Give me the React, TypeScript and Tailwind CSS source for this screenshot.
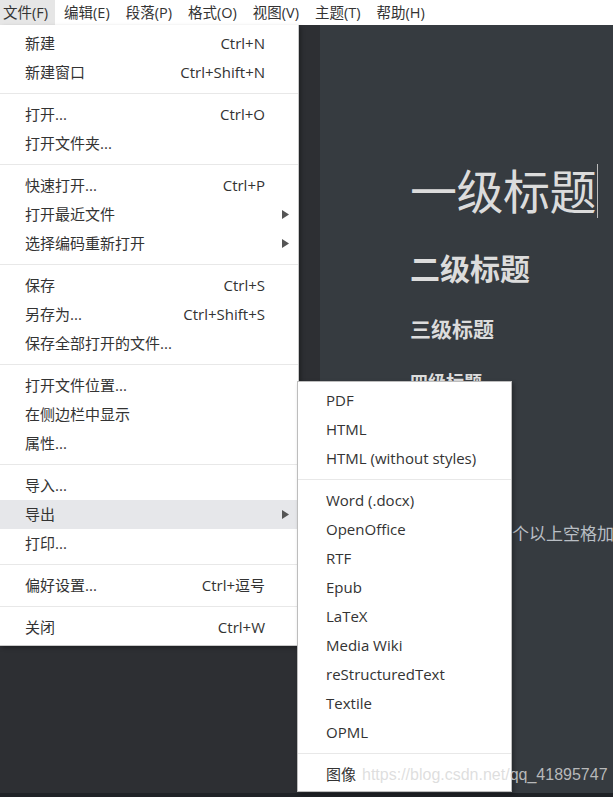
import React from "react";

type Item = { label: string; shortcut?: string; arrow?: boolean; active?: boolean };

const fileGroups: Item[][] = [
  [
    { label: "新建", shortcut: "Ctrl+N" },
    { label: "新建窗口", shortcut: "Ctrl+Shift+N" },
  ],
  [
    { label: "打开...", shortcut: "Ctrl+O" },
    { label: "打开文件夹..." },
  ],
  [
    { label: "快速打开...", shortcut: "Ctrl+P" },
    { label: "打开最近文件", arrow: true },
    { label: "选择编码重新打开", arrow: true },
  ],
  [
    { label: "保存", shortcut: "Ctrl+S" },
    { label: "另存为...", shortcut: "Ctrl+Shift+S" },
    { label: "保存全部打开的文件..." },
  ],
  [
    { label: "打开文件位置..." },
    { label: "在侧边栏中显示" },
    { label: "属性..." },
  ],
  [
    { label: "导入..." },
    { label: "导出", arrow: true, active: true },
    { label: "打印..." },
  ],
  [{ label: "偏好设置...", shortcut: "Ctrl+逗号" }],
  [{ label: "关闭", shortcut: "Ctrl+W" }],
];

const exportGroups: string[][] = [
  ["PDF", "HTML", "HTML (without styles)"],
  ["Word (.docx)", "OpenOffice", "RTF", "Epub", "LaTeX", "Media Wiki", "reStructuredText", "Textile", "OPML"],
  ["图像"],
];

const menus = ["文件(F)", "编辑(E)", "段落(P)", "格式(O)", "视图(V)", "主题(T)", "帮助(H)"];

function Arrow() {
  return (
    <svg width="7" height="9" viewBox="0 0 7 9" className="shrink-0">
      <polygon points="0,0 7,4.5 0,9" fill="#555" />
    </svg>
  );
}

function Sep() {
  return <div className="my-[6px] h-px bg-[#e8e8e8]" />;
}

export default function App() {
  const font = { fontFamily: '"Open Sans", "Noto Sans CJK SC", sans-serif' };
  return (
    <div
      className="relative w-[613px] h-[797px] overflow-hidden flex flex-col bg-[#363b40] text-[#333]"
      style={font}
    >
      {/* menu bar */}
      <div className="h-[25px] bg-white flex items-stretch text-[14.5px] shrink-0">
        {menus.map((m, i) => (
          <div
            key={m}
            className={`flex items-center whitespace-nowrap ${i === 0 ? "pl-[3px] pr-[7px] bg-[#e6e6e6]" : "pl-[9px] pr-[7px]"}`}
          >
            {m}
          </div>
        ))}
      </div>

      {/* body */}
      <div className="flex flex-1 min-h-0">
        <div className="w-[320px] bg-[#2d2f33] shrink-0" />
        <div className="flex-1 bg-[#363b40] overflow-hidden pl-[90px] pt-[138px] text-[#dcdcdc]">
          <div className="flex items-center h-[56px]">
            <span className="text-[47px] font-normal leading-none tracking-[-0.5px] whitespace-nowrap">一级标题</span>
            <span className="w-px h-[54px] bg-[#bbb] ml-[1px]" />
          </div>
          <div className="mt-[35px] text-[30px] font-bold leading-none whitespace-nowrap">二级标题</div>
          <div className="mt-[35px] text-[21px] font-bold leading-none whitespace-nowrap">三级标题</div>
          <div className="mt-[33px] text-[18px] font-bold leading-none whitespace-nowrap">四级标题</div>
          <div className="mt-[134px] text-[17px] leading-none whitespace-nowrap text-[#b9bec4]">
            段内换行用两个以上空格加回车
          </div>
        </div>
      </div>
      <div className="h-[4px] bg-[#1f2226] shrink-0" />

      {/* file menu */}
      <div className="absolute left-0 top-[25px] w-[299px] bg-white border-r border-b border-[#c9c9c9] pt-[4px] pb-[3px] text-[15px] shadow-[2px_2px_4px_rgba(0,0,0,0.3)]">
        {fileGroups.map((g, gi) => (
          <React.Fragment key={gi}>
            {gi > 0 && <Sep />}
            {g.map((it) => (
              <div
                key={it.label}
                className={`h-[29px] flex items-center pl-[25px] pr-[9px] ${it.active ? "bg-[#e6e7ea]" : ""}`}
              >
                <span className="flex-1 whitespace-nowrap">{it.label}</span>
                {it.shortcut && <span className="whitespace-nowrap mr-[24px]">{it.shortcut}</span>}
                {it.arrow && <Arrow />}
              </div>
            ))}
          </React.Fragment>
        ))}
      </div>

      {/* export submenu */}
      <div className="absolute left-[297px] top-[381px] w-[215px] bg-white border border-[#bdbdbd] pt-[4px] pb-[2px] text-[15px] shadow-[2px_2px_4px_rgba(0,0,0,0.3)]">
        {exportGroups.map((g, gi) => (
          <React.Fragment key={gi}>
            {gi > 0 && <Sep />}
            {g.map((label) => (
              <div key={label} className="h-[29px] flex items-center pl-[28px] whitespace-nowrap">
                {label}
              </div>
            ))}
          </React.Fragment>
        ))}
      </div>

      {/* watermark */}
      <div
        className="absolute left-[362px] top-[767px] text-[16px] leading-none text-[rgba(215,215,215,0.82)] whitespace-nowrap pointer-events-none"
        style={{ fontFamily: '"Liberation Sans", Arial, sans-serif' }}
      >
        https://blog.csdn.net/qq_41895747
      </div>
    </div>
  );
}
